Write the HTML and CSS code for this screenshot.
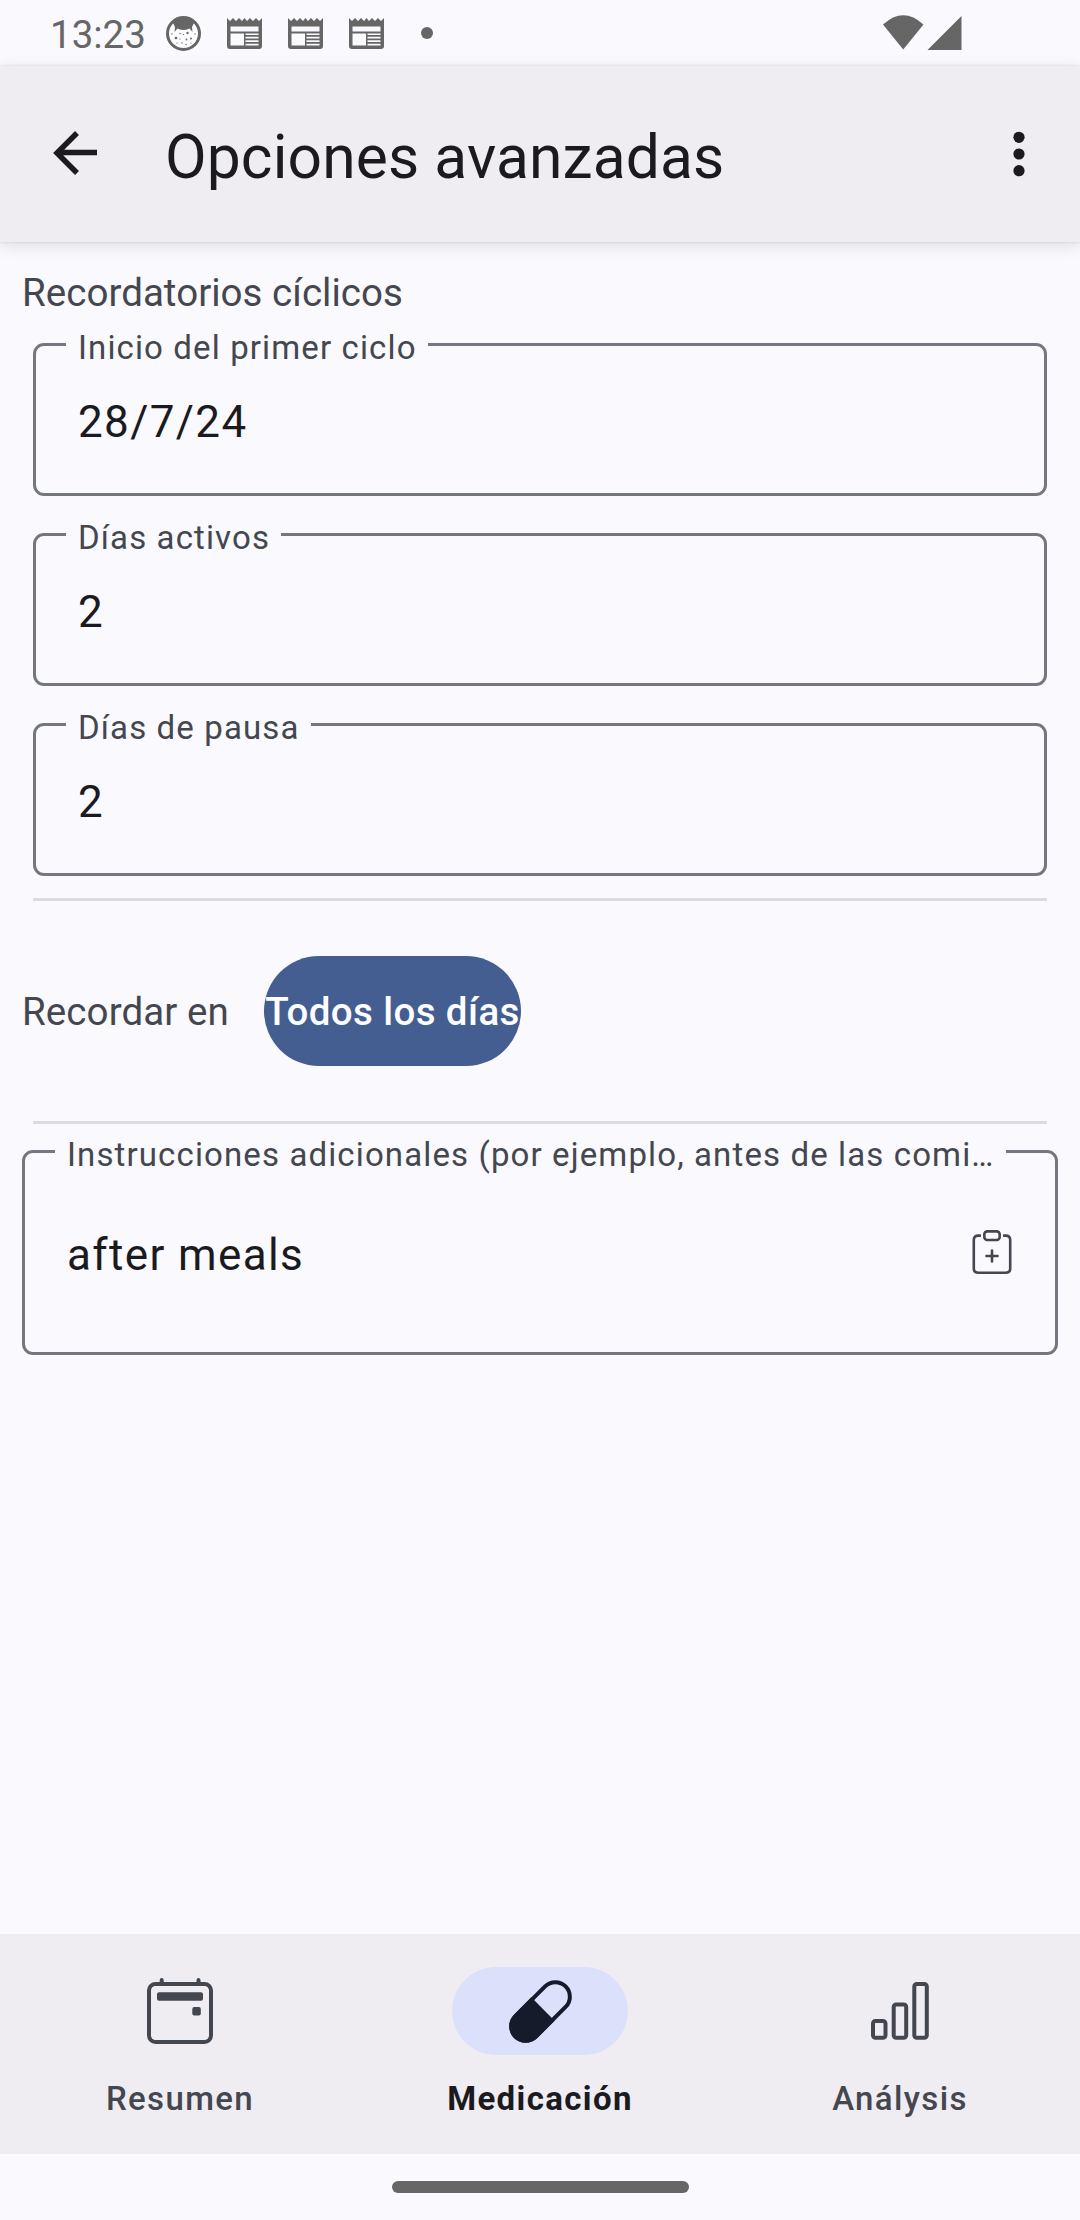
FILE: index.html
```html
<!DOCTYPE html>
<html lang="es">
<head>
<meta charset="utf-8">
<title>Opciones avanzadas</title>
<link rel="stylesheet" href="styles.css">
</head>
<body>
<svg width="0" height="0" class="defs">
  <symbol id="news" viewBox="0 0 35 31">
    <path fill="#666" fill-rule="evenodd" d="M0 0l3 3 3-3 3 3 3-3 3 3 2.500-3 2.500 3 3-3 3 3 3-3 3 3 3-3V28a3 3 0 0 1-3 3H3a3 3 0 0 1-3-3zM3.500 8.500v5h28v-5zM3.500 15.500v12h13.500v-12zM18.500 15.500v1.500h13v-1.500zM18.500 18.800v1.800h13v-1.800zM18.500 22.200v1.800h13v-1.800zM18.500 25.700v1.800h13v-1.800z"/>
  </symbol>
</svg>
<header class="status">
  <span class="clock">13:23</span>
  <svg class="face" viewBox="0 0 35 35">
    <circle cx="17.500" cy="17.500" r="16" fill="#fdfdff" stroke="#666" stroke-width="3"/>
    <path fill="#666" d="M6.500 6Q17.500-3 28.500 6L26 11l.5 5-3-3.500Q20 14 17.500 14T11.500 12.500L8.500 16l.5-5z"/>
    <g fill="#666"><circle cx="14" cy="17.500" r=".7"/><circle cx="21.500" cy="17" r="1.200"/><circle cx="10" cy="22" r="1.300"/><circle cx="25" cy="22.500" r="1"/><circle cx="16" cy="27" r=".7"/><circle cx="20" cy="28.500" r=".7"/><circle cx="17.500" cy="18.500" r=".6"/><circle cx="6" cy="18" r=".7"/><circle cx="29" cy="18" r=".7"/><circle cx="14" cy="23" r=".6"/><circle cx="20.500" cy="23.500" r=".9"/><circle cx="11" cy="27" r=".6"/><circle cx="25" cy="27" r=".6"/></g>
  </svg>
  <svg class="news"><use href="#news"/></svg>
  <svg class="news"><use href="#news"/></svg>
  <svg class="news"><use href="#news"/></svg>
  <span class="more-dot"></span>
  <svg class="signals" viewBox="0 0 79 36" fill="#666"><path d="M0 9.500Q20.200-9 40.500 9.500L20.200 34.500z"/><path d="M78.500 1v34H44.500z"/></svg>
</header>
<div class="appbar">
  <svg class="back" viewBox="0 0 44 44"><path d="M44 21.500H4M24 2L4 22l20 20" fill="none" stroke="#1b1b1f" stroke-width="5.500"/></svg>
  <h1>Opciones avanzadas</h1>
  <svg class="menu" viewBox="0 0 12 46" fill="#1b1b1f"><circle cx="6" cy="6.300" r="5.600"/><circle cx="6" cy="23" r="5.600"/><circle cx="6" cy="39.700" r="5.600"/></svg>
</div>
<main>
  <h2>Recordatorios cíclicos</h2>
  <fieldset class="field"><legend>Inicio del primer ciclo</legend><span>28/7/24</span></fieldset>
  <fieldset class="field"><legend>Días activos</legend><span>2</span></fieldset>
  <fieldset class="field last"><legend>Días de pausa</legend><span>2</span></fieldset>
  <div class="divider"></div>
  <div class="remind"><span class="remind-label">Recordar en</span><button>Todos los días</button></div>
  <div class="divider"></div>
  <fieldset class="field notes"><legend>Instrucciones adicionales (por ejemplo, antes de las comi…</legend><span>after meals</span>
    <svg class="clip" viewBox="0 0 40 44" fill="none" stroke="#44474f" stroke-width="2.600"><path d="M9 5.600H6.200Q1.800 5.600 1.800 10V38.500Q1.800 42.700 6.200 42.700H33.800Q38.200 42.700 38.200 38.500V10Q38.200 5.600 33.800 5.600H31"/><rect x="12.300" y="1.400" width="15.400" height="8.600" rx="3"/><path d="M20 20.500v11M14.500 26h11" stroke-linecap="round"/></svg>
  </fieldset>
</main>
<nav>
  <a class="tab"><span class="chip"><svg class="calendar" viewBox="0 0 66 66"><rect x="2" y="6" width="62" height="58" rx="6.500" fill="none" stroke="#44474f" stroke-width="4"/><path d="M14.700 2v4M51.500 2v4" stroke="#44474f" stroke-width="4" stroke-linecap="round"/><rect x="10" y="14.300" width="46" height="8.500" rx="2" fill="#44474f"/><rect x="45.300" y="29" width="8.500" height="8.500" rx="2" fill="#44474f"/></svg></span>Resumen</a>
  <a class="tab active"><span class="chip"><svg class="pill" viewBox="0 0 64 64"><g transform="translate(.5 .5) rotate(45 32 32)"><rect x="17.500" y="-3.500" width="29" height="71" rx="14.500" fill="none" stroke="#161b2c" stroke-width="4"/><path d="M15.500 28.500h33v24.500a16.500 16.500 0 0 1-33 0z" fill="#161b2c"/></g></svg></span>Medicación</a>
  <a class="tab"><span class="chip"><svg class="bars" viewBox="0 0 58 58" fill="none" stroke="#44474f" stroke-width="4"><rect x="2" y="39" width="12.500" height="16.700" rx="2.500"/><rect x="22.700" y="22.500" width="12.500" height="33.200" rx="2.500"/><rect x="43.300" y="2" width="12.500" height="53.700" rx="2.500"/></svg></span>Análysis</a>
</nav>
<footer><span class="handle"></span></footer>
</body>
</html>
```

FILE: styles.css
```css
* { box-sizing: border-box; }
body { margin: 0; width: 1080px; height: 2220px; display: flex; flex-direction: column; background: #faf9fe; font-family: Roboto, sans-serif; color: #1b1b1f; overflow: hidden; }
svg { display: block; flex: none; }
.defs { position: absolute; }
.status { height: 66px; padding-left: 50px; display: flex; flex: none; align-items: flex-start; color: #666; }
.clock { width: 116px; padding-top: 12px; font-size: 38.5px; line-height: 45px; }
.face { width: 35px; height: 35px; margin: 16px 26px 0 0; }
.news { width: 35px; height: 31px; margin: 18px 26px 0 0; }
.more-dot { width: 12px; height: 12px; margin: 27px 0 0 11px; border-radius: 50%; background: #666; }
.signals { width: 79px; height: 36px; margin: 15px 118px 0 auto; }
.appbar { height: 176px; flex: none; display: flex; align-items: flex-start; padding: 0 55px 0 53px; background: #efedf2; box-shadow: 0 4px 16px rgba(0,0,0,.11), 0 0 3px rgba(0,0,0,.12); }
.back { width: 44px; height: 44px; margin-top: 65px; }
h1 { margin: 56px 0 0 68px; font-size: 60.5px; line-height: 71px; font-weight: 400; letter-spacing: .13px; }
.menu { width: 12px; height: 46px; margin: 65px 0 0 auto; }
main { flex: 1; padding: 28px 33px 0; }
h2 { margin: 0 0 20px -11px; font-size: 38.5px; line-height: 45px; font-weight: 400; letter-spacing: .04px; color: #44474f; }
.field { position: relative; height: 161px; min-width: 0; margin: 0 0 29px; padding: 0 0 0 30px; border: 3px solid #74777f; border-radius: 11px; }
.field legend { height: 19px; padding: 0 11px 0 12px; font-size: 33px; line-height: 25px; letter-spacing: 1.12px; color: #44474f; white-space: nowrap; }
.field > span { display: block; font-size: 44px; line-height: 52px; letter-spacing: 1.375px; padding: 42px 0 0 12px; }
.field.last { margin-bottom: 22px; }
.divider { height: 3px; background: #dcdce0; }
.remind { height: 220px; display: flex; align-items: center; margin-left: -11px; font-size: 38.5px; letter-spacing: .1px; color: #44474f; }
.remind-label { width: 242px; }
button { width: 257px; height: 110px; padding: 0; border: 0; border-radius: 55px; background: #455e91; color: #fff; font: 500 38.5px Roboto, sans-serif; letter-spacing: .4px; white-space: nowrap; }
.field.notes { height: 213px; margin: 18px -11px 0; }
.field.notes > span { padding-top: 68px; }
.clip { position: absolute; right: 43px; top: 69px; width: 40px; height: 44px; }
nav { height: 220px; flex: none; display: flex; background: #efedf2; }
.tab { flex: 1; display: flex; flex-direction: column; align-items: center; padding-top: 33px; color: #44474f; font-size: 33px; line-height: 39px; font-weight: 500; letter-spacing: 1.375px; }
.chip { width: 176px; height: 88px; margin-bottom: 24px; border-radius: 44px; display: flex; align-items: center; justify-content: center; }
.active { color: #1b1b1f; font-weight: 700; }
.active .chip { background: #dbe1fa; }
.calendar { width: 66px; height: 66px; }
.pill { width: 64px; height: 64px; overflow: visible; }
.bars { width: 58px; height: 58px; }
footer { height: 66px; flex: none; display: flex; align-items: center; justify-content: center; }
.handle { width: 297px; height: 12px; border-radius: 6px; background: #666; }
```
